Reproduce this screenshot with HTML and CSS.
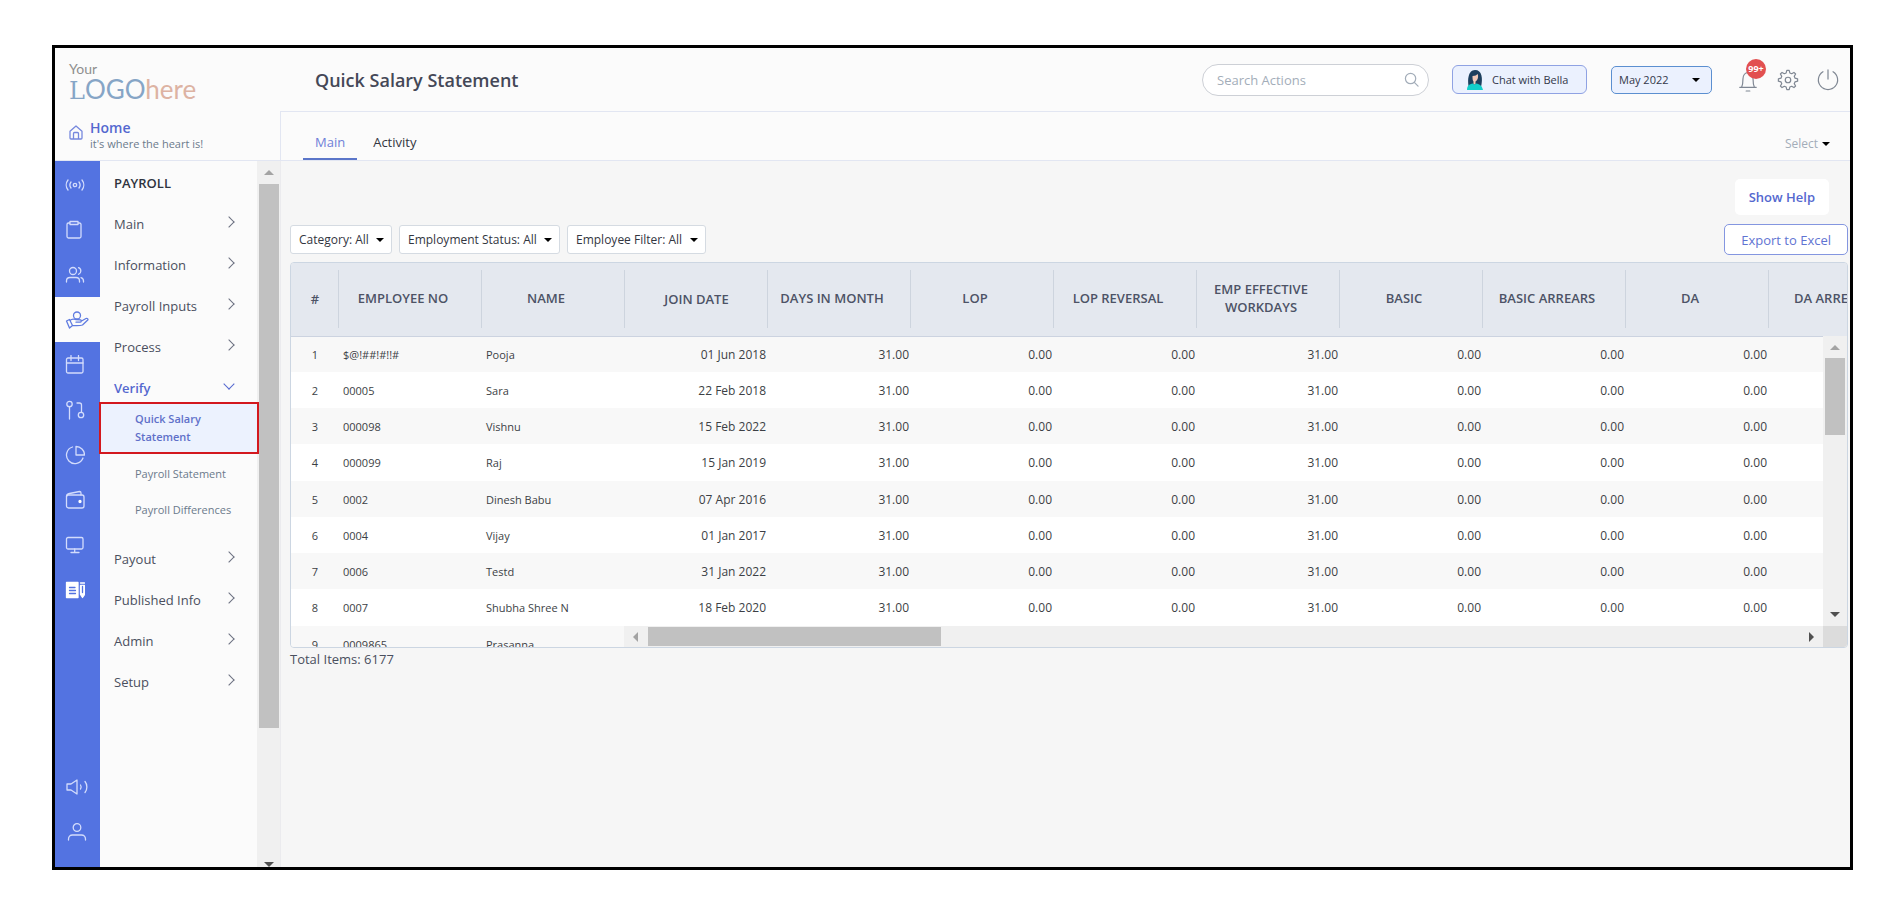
FILE: index.html
```html
<!DOCTYPE html>
<html lang="en">
<head>
  <meta charset="UTF-8" />
  <meta name="viewport" content="width=device-width, initial-scale=1.0"/>
  <title>Quick Salary Statement</title>
  <link rel="stylesheet" href="styles.css">
</head>
<body>
  <div class="app">
    <header class="header">
      <div class="brand">
        <a class="logo" href="#"><span class="logo-top">Your</span><span class="logo-name"><span class="logo-slab">L</span>OGO<span class="logo-here">here</span></span></a>
        <a class="home" href="#">
          <svg class="home-icon" viewBox="0 0 14 15"><path d="M1 6.200 7 1l6 5.200V13a1 1 0 0 1-1 1H2a1 1 0 0 1-1-1zM4.500 14V8.500a1 1 0 0 1 1-1h3a1 1 0 0 1 1 1V14"/></svg>
          <span class="home-text"><strong>Home</strong><small>it's where the heart is!</small></span>
        </a>
      </div>
      <div class="header-main">
        <div class="topbar">
          <h1>Quick Salary Statement</h1>
          <label class="search">
            <input type="text" placeholder="Search Actions" aria-label="Search Actions" />
            <svg viewBox="0 0 16 16"><circle cx="7" cy="7" r="5.500"/><path d="m11 11 4 4"/></svg>
          </label>
          <button class="chat">
            <svg viewBox="0 0 18 22"><path class="hair" d="M3 19C1 12 2 1 9 1s8 8 6 17z"/><path class="face" d="M6.500 7c3 0 4-1 5-2 1 1 1 6-2 7.500v3h-2v-3c-1-1-1-3-1-5.500z"/><path class="shirt" d="M1 21c0-4 2-6 6-6.500 1 1.500 2 1.500 3 0 4 .5 6 2.500 7 6.500z"/></svg>
            Chat with Bella
          </button>
          <label class="drop month"><select aria-label="Month"><option>May 2022</option></select></label>
          <button class="icon-btn bell" aria-label="Notifications">
            <svg viewBox="0 0 24 28"><path d="M3 22h18M5 22c1.500-3 1.500-6 1.500-9C6.500 8.500 9 6 12 6s5.500 2.500 5.500 7c0 3 0 6 1.500 9M12 6V4M10 26h4"/></svg>
            <span class="badge">99+</span>
          </button>
          <button class="icon-btn gear" aria-label="Settings">
            <svg viewBox="0 0 24 24"><circle cx="12" cy="12" r="3"/><path d="M10 4.300 10.700 1.500h2.600L14 4.300l2 .9 2.500-1.500 1.800 1.800L18.800 8l.9 2 2.800.7v2.600l-2.800.7-.9 2 1.500 2.500-1.800 1.800L16 18.800l-2 .9-.7 2.800h-2.600L10 19.700l-2-.9-2.500 1.500-1.800-1.800L5.200 16l-.9-2-2.800-.7v-2.600L4.300 10l.9-2-1.500-2.500 1.800-1.800L8 5.200z"/></svg>
          </button>
          <button class="icon-btn" aria-label="Log out">
            <svg viewBox="0 0 24 24"><path d="M12 1v10M6.500 3a10.500 10.500 0 1 0 11 0"/></svg>
          </button>
        </div>
        <nav class="tabs">
          <a class="tab active" href="#">Main</a>
          <a class="tab" href="#">Activity</a>
          <label class="drop pick"><select aria-label="Select"><option>Select</option></select></label>
        </nav>
      </div>
    </header>

    <div class="body">
      <nav class="rail">
        <a href="#" aria-label="Live"><svg viewBox="0 0 20 20"><circle cx="10" cy="10" r="1.700"/><path d="M6 7a5 5 0 0 0 0 6M14 7a5 5 0 0 1 0 6M3 5a8 8 0 0 0 0 10M17 5a8 8 0 0 1 0 10"/></svg></a>
        <a href="#" aria-label="Tasks"><svg viewBox="0 0 20 20"><path d="M5 3H3.500A1.500 1.500 0 0 0 2 4.500v12A1.500 1.500 0 0 0 3.500 18h11a1.500 1.500 0 0 0 1.500-1.500v-12A1.500 1.500 0 0 0 14.500 3H13M5 1.500h8v3H5z"/></svg></a>
        <a href="#" aria-label="Employees"><svg viewBox="0 0 20 20"><circle cx="8" cy="6" r="3.500"/><path d="M1.500 17v-1c0-2 1.500-3.500 3.500-3.500h6c2 0 3.500 1.500 3.500 3.500v1M13.500 2.700a3.500 3.500 0 0 1 0 6.600M16 12.700c1.500.5 2.500 1.800 2.500 3.300v1"/></svg></a>
        <a class="active" href="#" aria-label="Payroll"><svg class="wide" viewBox="0 0 24 20"><circle cx="12" cy="5.500" r="3.500"/><path d="m1.500 11 3-1.500 3 6-3 2.500zM5 10.500C7 8.500 9 9 10.500 9.500l5 .3c1.200.4 1 2.200-.5 2.400h-4M16.500 11l4.500-2.500c1.500-.6 2.500.8 1.500 1.800l-5 4.700c-3 1-7 .5-10 .5"/></svg></a>
        <a href="#" aria-label="Leave"><svg viewBox="0 0 20 20"><rect x="1.500" y="3" width="16.500" height="15" rx="1.500"/><path d="M1.500 8H18M6 .5v5M13.500.5v5"/></svg></a>
        <a href="#" aria-label="Workflow"><svg viewBox="0 0 20 20"><circle cx="4.500" cy="4" r="2.700"/><path d="M4.500 7v12M12 3h2.500a2 2 0 0 1 2 2v7"/><circle cx="16" cy="15" r="2.700"/></svg></a>
        <a href="#" aria-label="Reports"><svg viewBox="0 0 20 20"><path d="M7.500 2A8.500 8.500 0 1 0 18 13M11 1.500V10h8.500A8.500 8.500 0 0 0 11 1.500z"/></svg></a>
        <a href="#" aria-label="Wallet"><svg viewBox="0 0 20 20"><rect x="1.500" y="5" width="17.500" height="13" rx="2"/><path d="M1.500 6.500c0-2 1-2.500 3-3l10-2c1 0 1.500.5 1.500 1.500V5"/><circle class="solid" cx="15" cy="11.500" r="1"/></svg></a>
        <a href="#" aria-label="Desktop"><svg viewBox="0 0 20 20"><rect x="1.500" y="2.500" width="16.500" height="11.500" rx="1.500"/><path d="M9.700 14v3.500M6 17.500h8"/></svg></a>
        <a href="#" aria-label="Forms"><svg viewBox="0 0 20 20"><path class="solid" d="M1.500 2.500h11.500v15h-11.500zM15.500 3h4M15.500 5.500h4v9l-2 3-2-3z"/><path class="ink" d="M4.500 7.500h5.500M4.500 10.500h6M4.500 13.500h6M17.500 6.500v6"/></svg></a>
        <a class="push" href="#" aria-label="Announcements"><svg class="wide" viewBox="0 0 24 20"><path d="M2 7h4l6-4v14l-6-4H2zM15.500 8c.8 1.200.8 3 0 4M20 4.500c2.500 3 2.500 8 0 11"/></svg></a>
        <a href="#" aria-label="Profile"><svg class="wide" viewBox="0 0 24 20"><circle cx="12" cy="5.500" r="3.800"/><path d="M3.500 18v-1c0-2 1.500-4 4-4h9c2.500 0 4 2 4 4v1"/></svg></a>
      </nav>

      <aside class="sidebar">
        <nav class="menu">
          <h2>PAYROLL</h2>
          <ul>
            <li><a class="item" href="#">Main</a></li>
            <li><a class="item" href="#">Information</a></li>
            <li><a class="item" href="#">Payroll Inputs</a></li>
            <li><a class="item" href="#">Process</a></li>
            <li>
              <a class="item open" href="#">Verify</a>
              <div class="submenu">
                <a class="current" href="#">Quick Salary Statement</a>
                <a href="#">Payroll Statement</a>
                <a href="#">Payroll Differences</a>
              </div>
            </li>
            <li><a class="item" href="#">Payout</a></li>
            <li><a class="item" href="#">Published Info</a></li>
            <li><a class="item" href="#">Admin</a></li>
            <li><a class="item" href="#">Setup</a></li>
          </ul>
        </nav>
        <div class="side-scroll"><i class="arrow up"></i><i class="thumb"></i><i class="arrow down"></i></div>
      </aside>

      <main class="content">
        <button class="help">Show Help</button>
        <div class="filters">
          <label class="drop filter"><select aria-label="Category"><option>Category: All</option></select></label>
          <label class="drop filter"><select aria-label="Employment Status"><option>Employment Status: All</option></select></label>
          <label class="drop filter"><select aria-label="Employee Filter"><option>Employee Filter: All</option></select></label>
          <button class="export">Export to Excel</button>
        </div>

        <div class="grid">
          <table>
            <thead>
              <tr><th class="num">#</th><th>EMPLOYEE NO</th><th>NAME</th><th class="date">JOIN DATE</th><th>DAYS IN MONTH</th><th>LOP</th><th>LOP REVERSAL</th><th>EMP EFFECTIVE WORKDAYS</th><th>BASIC</th><th>BASIC ARREARS</th><th>DA</th><th>DA ARREARS</th></tr>
            </thead>
            <tbody>
              <tr><td class="num">1</td><td class="txt">$@!##!#!!#</td><td class="txt">Pooja</td><td>01 Jun 2018</td><td>31.00</td><td>0.00</td><td>0.00</td><td>31.00</td><td>0.00</td><td>0.00</td><td>0.00</td><td></td></tr>
              <tr><td class="num">2</td><td class="txt">00005</td><td class="txt">Sara</td><td>22 Feb 2018</td><td>31.00</td><td>0.00</td><td>0.00</td><td>31.00</td><td>0.00</td><td>0.00</td><td>0.00</td><td></td></tr>
              <tr><td class="num">3</td><td class="txt">000098</td><td class="txt">Vishnu</td><td>15 Feb 2022</td><td>31.00</td><td>0.00</td><td>0.00</td><td>31.00</td><td>0.00</td><td>0.00</td><td>0.00</td><td></td></tr>
              <tr><td class="num">4</td><td class="txt">000099</td><td class="txt">Raj</td><td>15 Jan 2019</td><td>31.00</td><td>0.00</td><td>0.00</td><td>31.00</td><td>0.00</td><td>0.00</td><td>0.00</td><td></td></tr>
              <tr><td class="num">5</td><td class="txt">0002</td><td class="txt">Dinesh Babu</td><td>07 Apr 2016</td><td>31.00</td><td>0.00</td><td>0.00</td><td>31.00</td><td>0.00</td><td>0.00</td><td>0.00</td><td></td></tr>
              <tr><td class="num">6</td><td class="txt">0004</td><td class="txt">Vijay</td><td>01 Jan 2017</td><td>31.00</td><td>0.00</td><td>0.00</td><td>31.00</td><td>0.00</td><td>0.00</td><td>0.00</td><td></td></tr>
              <tr><td class="num">7</td><td class="txt">0006</td><td class="txt">Testd</td><td>31 Jan 2022</td><td>31.00</td><td>0.00</td><td>0.00</td><td>31.00</td><td>0.00</td><td>0.00</td><td>0.00</td><td></td></tr>
              <tr><td class="num">8</td><td class="txt">0007</td><td class="txt">Shubha Shree N</td><td>18 Feb 2020</td><td>31.00</td><td>0.00</td><td>0.00</td><td>31.00</td><td>0.00</td><td>0.00</td><td>0.00</td><td></td></tr>
              <tr><td class="num">9</td><td class="txt">0009865</td><td class="txt">Prasanna</td><td></td><td></td><td></td><td></td><td></td><td></td><td></td><td></td><td></td></tr>
            </tbody>
          </table>
          <div class="v-scroll"><i class="arrow up"></i><i class="thumb"></i><i class="arrow down"></i></div>
          <div class="h-scroll"><i class="arrow left"></i><i class="thumb"></i><i class="arrow right"></i></div>
          <div class="corner"></div>
        </div>
        <p class="total">Total Items: 6177</p>
      </main>
    </div>
  </div>
</body>
</html>
```

FILE: styles.css
```css
* {
  margin: 0;
  padding: 0;
  box-sizing: border-box;
}

body {
  background: #fff;
  padding: 45px 37px 40px 52px;
  font-family: 'Open Sans', sans-serif;
  font-size: 13px;
  color: #4a4f5e;
}

a {
  color: inherit;
  text-decoration: none;
}

button,
select,
input {
  font-family: inherit;
  color: inherit;
}

svg {
  display: block;
  fill: none;
  stroke: currentColor;
  stroke-width: 1.3;
  stroke-linecap: round;
  stroke-linejoin: round;
}

.app {
  display: flex;
  flex-direction: column;
  min-height: calc(100vh - 85px);
  border: 3px solid #000;
  background: #fbfbfb;
}

/* header */
.header {
  display: flex;
  border-bottom: 1px solid #e2e6f2;
}

.brand {
  width: 225px;
  padding: 12px 0 0 14px;
}

.logo {
  display: block;
  height: 50px;
  font-family: Lato, sans-serif;
}

.logo-top,
.logo-name {
  display: block;
}

.logo-top {
  font-size: 14px;
  line-height: 17px;
  color: #8f8f8f;
}

.logo-name {
  font-size: 26px;
  line-height: 24px;
  color: #86a5c6;
}

.logo-slab {
  font-family: 'DejaVu Serif', serif;
  font-size: 24px;
}

.logo-here {
  color: #ddb3a3;
}

.home {
  display: flex;
  gap: 7px;
  padding-top: 10px;
}

.home-icon {
  width: 14px;
  height: 15px;
  margin-top: 5px;
  color: #7688dd;
}

.home-text strong,
.home-text small {
  display: block;
  line-height: 16px;
}

.home-text strong {
  font-size: 14px;
  font-weight: 600;
  color: #5468cf;
}

.home-text small {
  font-size: 11px;
  color: #6b7a8c;
}

.header-main {
  flex: 1;
}

.topbar {
  display: flex;
  align-items: center;
  height: 63px;
  padding: 0 11px 0 35px;
}

.topbar h1 {
  flex: 1;
  font-size: 18px;
  font-weight: 600;
  color: #444857;
}

.search {
  display: flex;
  align-items: center;
  width: 227px;
  height: 32px;
  padding: 0 9px 0 14px;
  border: 1px solid #cdd0d6;
  border-radius: 16px;
  background: #fff;
  color: #a3adb9;
}

.search input {
  flex: 1;
  min-width: 0;
  border: none;
  outline: none;
  background: none;
  font-size: 13px;
}

.search input::placeholder {
  color: #a3adb9;
}

.search svg {
  width: 15px;
  height: 15px;
}

.chat {
  display: flex;
  align-items: center;
  gap: 8px;
  width: 135px;
  height: 29px;
  margin-left: 23px;
  padding: 0 0 0 13px;
  border: 1px solid #8fa2e3;
  border-radius: 6px;
  background: #ebf1fe;
  font-size: 11px;
  color: #33384a;
}

.chat svg {
  width: 18px;
  height: 22px;
  stroke: none;
}

.hair { fill: #1d3f5e; }
.face { fill: #f0c9b8; }
.shirt { fill: #12cfcb; }

/* drop-downs share one caret */
.drop {
  display: inline-flex;
  align-items: center;
}

.drop select {
  appearance: none;
  flex: 1;
  border: none;
  outline: none;
  background: none;
  font-size: 12px;
}

.drop::after {
  content: '';
  border: 4px solid transparent;
  border-top-color: #000;
  border-bottom: none;
}

.month {
  width: 101px;
  height: 28px;
  margin: 0 25px 0 24px;
  padding: 0 11px 0 7px;
  border: 1px solid #5b8fd0;
  border-radius: 5px;
  background: #ebf1fe;
  color: #33384a;
}

.month select {
  font-size: 11px;
}

.icon-btn {
  position: relative;
  border: none;
  background: none;
  color: #7f8793;
}

.icon-btn svg {
  width: 22px;
  height: 22px;
}

.icon-btn.bell svg {
  height: 26px;
}

.icon-btn.gear {
  margin: 0 18px;
}

.badge {
  position: absolute;
  top: -8px;
  left: 9px;
  width: 20px;
  height: 20px;
  border-radius: 50%;
  background: #e25050;
  color: #fff;
  font-size: 9px;
  font-weight: 700;
  line-height: 20px;
}

.tabs {
  display: flex;
  height: 49px;
  padding: 0 20px 0 22px;
  border-top: 1px solid #e2e6f2;
  border-left: 1px solid #e2e6f2;
}

.tab {
  padding: 20px 12px 0;
  font-size: 13px;
  line-height: 20px;
  color: #33363f;
}

.tab + .tab {
  padding-left: 16px;
}

.tab.active {
  border-bottom: 2px solid #5b76c9;
  color: #6f80d8;
}

.pick {
  gap: 3px;
  margin: 15px 0 0 auto;
  color: #a3adb9;
}

/* left side */
.body {
  display: flex;
  flex: 1;
}

.rail {
  display: flex;
  flex-direction: column;
  width: 45px;
  padding: 1px 0 13px;
  background: #5373e1;
  color: #d3dcfc;
}

.rail a {
  display: flex;
  align-items: center;
  height: 45px;
  padding-left: 10px;
}

.rail a.active {
  background: #fbfbfb;
  color: #5f7be0;
}

.rail a.push {
  margin-top: auto;
}

.rail svg {
  width: 20px;
  height: 20px;
}

.rail svg.wide {
  width: 24px;
}

.rail .solid {
  fill: #fff;
  stroke: #fff;
}

.rail .ink {
  stroke: #5373e1;
}

.sidebar {
  display: flex;
  width: 180px;
}

.menu {
  width: 157px;
  padding-top: 10px;
}

.menu h2 {
  padding-left: 14px;
  font-size: 13px;
  font-weight: 600;
  line-height: 24px;
  color: #2f3440;
}

.menu ul {
  list-style: none;
}

.menu li {
  margin-top: 16px;
}

.item {
  display: flex;
  align-items: center;
  justify-content: space-between;
  height: 25px;
  padding: 0 24px 0 14px;
}

.item::after {
  content: '';
  width: 7px;
  height: 7px;
  margin-bottom: 3px;
  border: solid #6b7080;
  border-width: 1px 1px 0 0;
  transform: rotate(45deg);
}

.item.open {
  font-weight: 600;
  color: #5468cf;
}

.item.open::after {
  margin-bottom: 8px;
  border-color: #5468cf;
  transform: rotate(135deg);
}

.submenu {
  padding: 2px 0;
}

.submenu a {
  display: block;
  padding-left: 35px;
  font-size: 11px;
  line-height: 36px;
  color: #6b7a8c;
}

.submenu a.current {
  margin: 0 -2px 2px -1px;
  padding: 6px 40px 6px 34px;
  border: 2px solid #d3181e;
  background: #ecf2fe;
  font-weight: 600;
  line-height: 18px;
  color: #5f70c9;
  position: relative;
}

/* scroll bars */
.side-scroll,
.v-scroll,
.h-scroll {
  display: flex;
  align-items: center;
  background: #f0f0f0;
}

.side-scroll,
.v-scroll {
  flex-direction: column;
}

.thumb {
  background: #c1c1c1;
}

.arrow {
  border: 5px solid transparent;
}

.arrow.up { border-top: none; border-bottom-color: #a3a3a3; }
.arrow.down { border-bottom: none; border-top-color: #505050; margin-top: auto; }
.arrow.left { border-left: none; border-right-color: #a3a3a3; }
.arrow.right { border-right: none; border-left-color: #505050; margin-left: auto; }

.side-scroll {
  width: 23px;
  padding-top: 9px;
}

.side-scroll .thumb {
  width: 20px;
  height: 78%;
  margin-top: 9px;
}

/* page */
.content {
  display: flex;
  flex: 1;
  flex-direction: column;
  min-width: 0;
  padding: 18px 2px 0 9px;
  border-left: 1px solid #ebebee;
  background: #f6f6f6;
}

.help {
  align-self: flex-end;
  height: 36px;
  margin-right: 19px;
  padding: 0 14px;
  border: none;
  border-radius: 5px;
  background: #fff;
  font-size: 13px;
  font-weight: 600;
  color: #5468cf;
}

.filters {
  display: flex;
  align-items: center;
  gap: 7px;
  margin: 9px 0 7px;
}

.filter {
  gap: 7px;
  height: 29px;
  padding: 0 7px 0 8px;
  border: 1px solid #d5dbe2;
  border-radius: 3px;
  background: #fff;
  color: #33363f;
}

.export {
  height: 31px;
  margin-left: auto;
  padding: 0 16px;
  border: 1px solid #8496e0;
  border-radius: 5px;
  background: #fff;
  font-size: 13px;
  color: #5f74d2;
}

.grid {
  position: relative;
  height: 386px;
  overflow: hidden;
  border: 1px solid #ccd6e2;
  border-radius: 4px;
}

table {
  width: 1621px;
  table-layout: fixed;
  border-collapse: collapse;
}

th {
  height: 73px;
  padding: 0 23px 2px 8px;
  border-bottom: 1px solid #ccd3e0;
  background: linear-gradient(#cdd4de, #cdd4de) right center / 1px 58px no-repeat #e4e8ef;
  font-size: 13px;
  font-weight: 600;
  line-height: 18px;
  color: #4d5366;
}

th.num {
  width: 48px;
  padding: 0;
}

th.date {
  padding: 0 16px;
}

td {
  height: 36px;
  padding-right: 2px;
  font-size: 12px;
  text-align: right;
  color: #3c3f45;
}

td.num,
td.txt {
  font-size: 11px;
}

td.num {
  padding: 0;
  text-align: center;
}

td.txt {
  padding-left: 4px;
  text-align: left;
}

tbody tr {
  background: #fff;
}

tbody tr:nth-child(odd) {
  background: #f8f8f8;
}

tbody tr:nth-child(4n) td {
  height: 37px;
}

.v-scroll {
  position: absolute;
  top: 73px;
  right: 0;
  bottom: 21px;
  width: 24px;
  padding: 9px 0;
}

.v-scroll .thumb {
  width: 20px;
  height: 77px;
  margin-top: 8px;
}

.h-scroll {
  position: absolute;
  right: 24px;
  bottom: 0;
  left: 333px;
  height: 21px;
  padding: 0 9px;
}

.h-scroll .thumb {
  width: 293px;
  height: 19px;
  margin-left: 10px;
}

.corner {
  position: absolute;
  right: 0;
  bottom: 0;
  width: 24px;
  height: 21px;
  background: #dcdcdc;
}

.total {
  line-height: 22px;
}
```
